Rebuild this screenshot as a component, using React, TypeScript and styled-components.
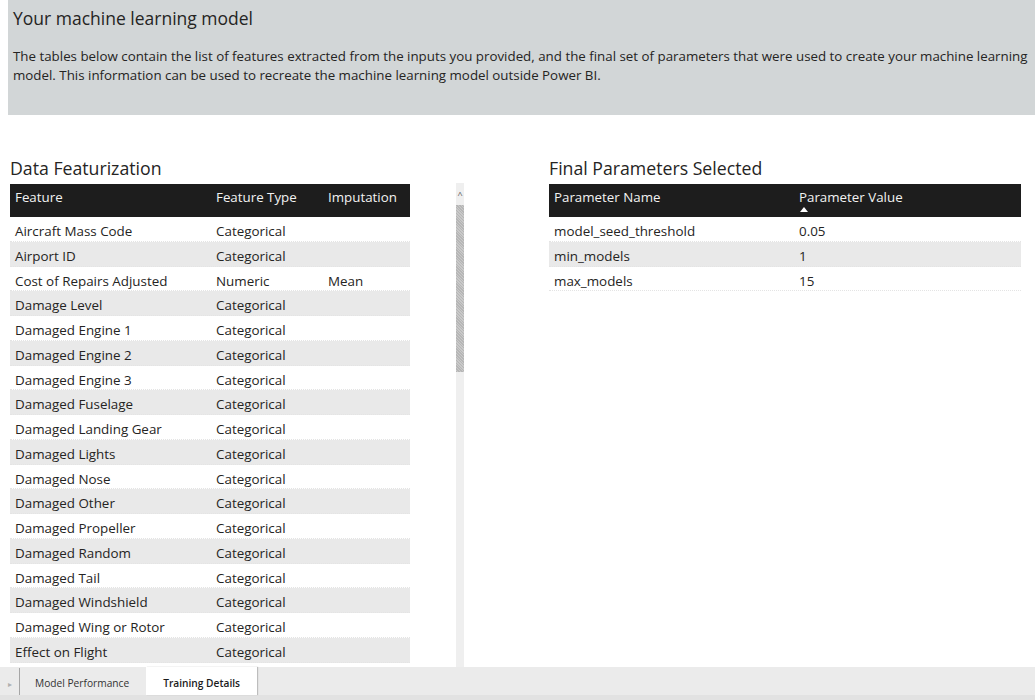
import React from "react";
import styled, { createGlobalStyle } from "styled-components";

const GlobalStyle = createGlobalStyle`
  html, body { margin: 0; padding: 0; background: #ffffff; }
  body { font-family: "Segoe UI", "Open Sans", "Noto Sans", sans-serif; color: #252423; }
`;

const Page = styled.div`
  width: 1035px;
  height: 700px;
  display: flex;
  flex-direction: column;
  overflow: hidden;
  background: #ffffff;
`;

const Header = styled.header`
  margin-left: 8px;
  height: 115px;
  box-sizing: border-box;
  background: #d2d6d7;
  padding: 5px 5px 0 5px;
  flex-shrink: 0;
`;

const Title = styled.h1`
  margin: 0;
  font-size: 17.5px;
  font-weight: 400;
  line-height: 26px;
  color: #252423;
`;

const Intro = styled.p`
  margin: 16px 0 0 0;
  font-size: 13.33px;
  line-height: 19px;
  color: #252423;
  width: 1020px;
`;

const Main = styled.main`
  flex: 1;
  display: flex;
  padding-top: 42px;
  min-height: 0;
  overflow: hidden;
`;

const LeftSection = styled.section`
  margin-left: 10px;
  display: flex;
  flex-direction: column;
  width: 455px;
  min-height: 0;
  overflow: hidden;
`;

const RightSection = styled.section`
  margin-left: 84px;
  display: flex;
  flex-direction: column;
  width: 472px;
  min-height: 0;
`;

const SectionTitle = styled.h2`
  margin: 0 0 5px 0;
  font-size: 17.7px;
  font-weight: 400;
  line-height: 22px;
  color: #252423;
`;

const TableArea = styled.div`
  display: flex;
  flex: 1;
  min-height: 0;
  gap: 46px;
`;

const Table = styled.div<{ $width: number }>`
  width: ${(p) => p.$width}px;
  display: flex;
  flex-direction: column;
  overflow: hidden;
  min-height: 0;
`;

const HeadRow = styled.div<{ $cols: string }>`
  display: grid;
  grid-template-columns: ${(p) => p.$cols};
  height: 33px;
  background: #1d1d1d;
  color: #f2f2f2;
  font-size: 13.33px;
  flex-shrink: 0;
`;

const HeadCell = styled.div`
  padding: 5px 5px 0 5px;
  line-height: 17px;
  display: flex;
  flex-direction: column;
  align-items: flex-start;
`;

const SortArrow = styled.span`
  width: 0;
  height: 0;
  border-left: 4px solid transparent;
  border-right: 4px solid transparent;
  border-bottom: 5px solid #ffffff;
  margin-top: 1px;
  margin-left: 1px;
`;

const Row = styled.div<{ $cols: string; $alt: boolean }>`
  display: grid;
  grid-template-columns: ${(p) => p.$cols};
  height: 24.75px;
  box-sizing: border-box;
  align-items: start;
  background: ${(p) => (p.$alt ? "#e9e9e9" : "#ffffff")};
  border-bottom: 1px dotted #e4e4e4;
  font-size: 13.4px;
  color: #252423;
  flex-shrink: 0;
`;

const Cell = styled.div`
  padding: 5px 5px 0 5px;
  white-space: nowrap;
  line-height: 18px;
`;

const ScrollBar = styled.div`
  width: 8px;
  margin-top: -1px;
  background: #efefef;
  display: flex;
  flex-direction: column;
  align-items: center;
  flex-shrink: 0;
`;

const ScrollArrow = styled.div`
  height: 22px;
  width: 8px;
  display: flex;
  align-items: center;
  justify-content: center;
  color: #555;
  font-size: 9px;
  line-height: 1;
`;

const ScrollThumb = styled.div`
  width: 8px;
  height: 167px;
  background: repeating-linear-gradient(45deg, #b6b6b6 0 1px, #c9c9c9 1px 2px);
`;

const TabBar = styled.footer`
  height: 33px;
  flex-shrink: 0;
  background: #ebebeb;
  display: flex;
  align-items: stretch;
  border-bottom: 5px solid #e2e2e2;
  box-sizing: border-box;
  font-size: 10.2px;
  color: #333;
`;

const NavArrow = styled.div`
  width: 20px;
  border-right: 1px solid #a6a6a6;
  margin: 1px 0 0 0;
  padding-top: 3px;
  box-sizing: border-box;
  display: flex;
  align-items: center;
  justify-content: center;
  color: #b0b0b0;
  font-size: 8px;
`;

const Tab = styled.div<{ $active?: boolean }>`
  display: flex;
  align-items: center;
  box-sizing: border-box;
  padding: ${(p) => (p.$active ? "4px 17px 0 17px" : "4px 17px 0 15px")};
  background: ${(p) => (p.$active ? "#ffffff" : "transparent")};
  font-weight: ${(p) => (p.$active ? 600 : 400)};
  color: ${(p) => (p.$active ? "#1b1b1b" : "#333333")};
  box-shadow: ${(p) => (p.$active ? "1px 0 1px #bdbdbd" : "none")};
  white-space: nowrap;
`;

const features: [string, string, string][] = [
  ["Aircraft Mass Code", "Categorical", ""],
  ["Airport ID", "Categorical", ""],
  ["Cost of Repairs Adjusted", "Numeric", "Mean"],
  ["Damage Level", "Categorical", ""],
  ["Damaged Engine 1", "Categorical", ""],
  ["Damaged Engine 2", "Categorical", ""],
  ["Damaged Engine 3", "Categorical", ""],
  ["Damaged Fuselage", "Categorical", ""],
  ["Damaged Landing Gear", "Categorical", ""],
  ["Damaged Lights", "Categorical", ""],
  ["Damaged Nose", "Categorical", ""],
  ["Damaged Other", "Categorical", ""],
  ["Damaged Propeller", "Categorical", ""],
  ["Damaged Random", "Categorical", ""],
  ["Damaged Tail", "Categorical", ""],
  ["Damaged Windshield", "Categorical", ""],
  ["Damaged Wing or Rotor", "Categorical", ""],
  ["Effect on Flight", "Categorical", ""],
];

const params: [string, string][] = [
  ["model_seed_threshold", "0.05"],
  ["min_models", "1"],
  ["max_models", "15"],
];

const leftCols = "201px 112px 87px";
const rightCols = "245px 227px";

export default function App() {
  return (
    <Page>
      <GlobalStyle />
      <Header>
        <Title>Your machine learning model</Title>
        <Intro>
          The tables below contain the list of features extracted from the inputs you provided, and the final set of
          parameters that were used to create your machine learning model. This information can be used to recreate the
          machine learning model outside Power BI.
        </Intro>
      </Header>
      <Main>
        <LeftSection>
          <SectionTitle>Data Featurization</SectionTitle>
          <TableArea>
            <Table $width={400}>
              <HeadRow $cols={leftCols}>
                <HeadCell>Feature</HeadCell>
                <HeadCell>Feature Type</HeadCell>
                <HeadCell>Imputation</HeadCell>
              </HeadRow>
              {features.map((f, i) => (
                <Row key={f[0]} $cols={leftCols} $alt={i % 2 === 1}>
                  <Cell>{f[0]}</Cell>
                  <Cell>{f[1]}</Cell>
                  <Cell>{f[2]}</Cell>
                </Row>
              ))}
            </Table>
            <ScrollBar>
              <ScrollArrow>^</ScrollArrow>
              <ScrollThumb />
            </ScrollBar>
          </TableArea>
        </LeftSection>
        <RightSection>
          <SectionTitle>Final Parameters Selected</SectionTitle>
          <Table $width={472}>
            <HeadRow $cols={rightCols}>
              <HeadCell>Parameter Name</HeadCell>
              <HeadCell>
                Parameter Value
                <SortArrow />
              </HeadCell>
            </HeadRow>
            {params.map((p, i) => (
              <Row key={p[0]} $cols={rightCols} $alt={i % 2 === 1}>
                <Cell>{p[0]}</Cell>
                <Cell>{p[1]}</Cell>
              </Row>
            ))}
          </Table>
        </RightSection>
      </Main>
      <TabBar>
        <NavArrow>▸</NavArrow>
        <Tab>Model Performance</Tab>
        <Tab $active>Training Details</Tab>
      </TabBar>
    </Page>
  );
}
